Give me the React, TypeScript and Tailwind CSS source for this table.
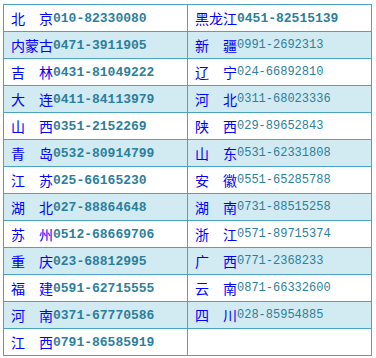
import React from "react";

type Cell = { name: string; tel: string; bold: boolean } | null;

const left: Cell[] = [
  { name: "北　京", tel: "010-82330080", bold: true },
  { name: "内蒙古", tel: "0471-3911905", bold: true },
  { name: "吉　林", tel: "0431-81049222", bold: true },
  { name: "大　连", tel: "0411-84113979", bold: true },
  { name: "山　西", tel: "0351-2152269", bold: true },
  { name: "青　岛", tel: "0532-80914799", bold: true },
  { name: "江　苏", tel: "025-66165230", bold: true },
  { name: "湖　北", tel: "027-88864648", bold: true },
  { name: "苏　州", tel: "0512-68669706", bold: true },
  { name: "重　庆", tel: "023-68812995", bold: true },
  { name: "福　建", tel: "0591-62715555", bold: true },
  { name: "河　南", tel: "0371-67770586", bold: true },
  { name: "江　西", tel: "0791-86585919", bold: true },
];

const right: Cell[] = [
  { name: "黑龙江", tel: "0451-82515139", bold: true },
  { name: "新　疆", tel: "0991-2692313", bold: false },
  { name: "辽　宁", tel: "024-66892810", bold: false },
  { name: "河　北", tel: "0311-68023336", bold: false },
  { name: "陕　西", tel: "029-89652843", bold: false },
  { name: "山　东", tel: "0531-62331808", bold: false },
  { name: "安　徽", tel: "0551-65285788", bold: false },
  { name: "湖　南", tel: "0731-88515258", bold: false },
  { name: "浙　江", tel: "0571-89715374", bold: false },
  { name: "广　西", tel: "0771-2368233", bold: false },
  { name: "云　南", tel: "0871-66332600", bold: false },
  { name: "四　川", tel: "028-85954885", bold: false },
  null,
];

function CellView({ cell, shaded }: { cell: Cell; shaded: boolean }) {
  return (
    <div
      className={
        "h-[27px] w-[184px] border-r border-b border-[#4ba4c4] flex items-center pl-[7px] " +
        (shaded ? "bg-[#d2eaf2]" : "bg-white")
      }
    >
      {cell && (
        <>
          <span
            className="text-[14px] leading-none text-[#0000ff]"
            style={{ fontFamily: '"Noto Sans CJK SC", sans-serif' }}
          >
            {cell.name}
          </span>
          <span
            className={
              cell.bold
                ? "text-[13px] font-bold leading-none text-[#2b7f9b]"
                : "text-[12px] leading-none text-[#2b7f9b]"
            }
            style={{ fontFamily: '"Liberation Mono", monospace' }}
          >
            {cell.tel}
          </span>
        </>
      )}
    </div>
  );
}

export default function App() {
  return (
    <div className="w-[376px] h-[358px] bg-white pt-[4px] pl-[3px]">
      <div className="w-[369px] border-l border-t border-[#4ba4c4] grid grid-cols-[184px_184px]">
        {left.map((l, i) => (
          <React.Fragment key={i}>
            <CellView cell={l} shaded={i % 2 === 1} />
            <CellView cell={right[i]} shaded={i % 2 === 1} />
          </React.Fragment>
        ))}
      </div>
    </div>
  );
}
